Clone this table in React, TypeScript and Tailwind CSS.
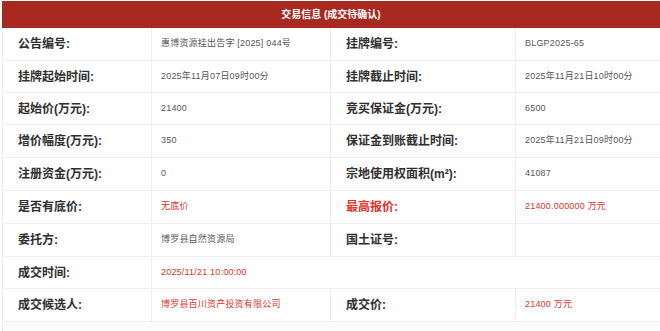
import React from "react";

type Cell = { text: string; red?: boolean };
type Row = { h: string; cells: [Cell, Cell, Cell, Cell] | [Cell, Cell] };

const rows: Row[] = [
  { h: "h-[33px]", cells: [{ text: "公告编号:" }, { text: "惠博资源挂出告字 [2025] 044号" }, { text: "挂牌编号:" }, { text: "BLGP2025-65" }] },
  { h: "h-[32px]", cells: [{ text: "挂牌起始时间:" }, { text: "2025年11月07日09时00分" }, { text: "挂牌截止时间:" }, { text: "2025年11月21日10时00分" }] },
  { h: "h-[32px]", cells: [{ text: "起始价(万元):" }, { text: "21400" }, { text: "竞买保证金(万元):" }, { text: "6500" }] },
  { h: "h-[33px]", cells: [{ text: "增价幅度(万元):" }, { text: "350" }, { text: "保证金到账截止时间:" }, { text: "2025年11月21日09时00分" }] },
  { h: "h-[33px]", cells: [{ text: "注册资金(万元):" }, { text: "0" }, { text: "宗地使用权面积(m²):" }, { text: "41087" }] },
  { h: "h-[33px]", cells: [{ text: "是否有底价:" }, { text: "无底价", red: true }, { text: "最高报价:", red: true }, { text: "21400.000000 万元", red: true }] },
  { h: "h-[33px]", cells: [{ text: "委托方:" }, { text: "博罗县自然资源局" }, { text: "国土证号:" }, { text: "" }] },
  { h: "h-[32px]", cells: [{ text: "成交时间:" }, { text: "2025/11/21 10:00:00", red: true }] },
  { h: "h-[33px]", cells: [{ text: "成交候选人:" }, { text: "博罗县百川资产投资有限公司", red: true }, { text: "成交价:" }, { text: "21400 万元", red: true }] },
];

function Label({ c, h }: { c: Cell; h: string }) {
  return (
    <div
      className={`${h} flex items-center pl-[15px] border-r border-b border-[#eeeeee] text-[12px] font-semibold whitespace-nowrap ${
        c.red ? "text-[#e0322b]" : "text-[#2e2e2e]"
      }`}
    >
      {c.text}
    </div>
  );
}

function Value({ c, h, noRight }: { c: Cell; h: string; noRight?: boolean }) {
  return (
    <div
      className={`${h} flex items-center pl-[9px] border-b border-[#eeeeee] text-[9px] tracking-[0.2px] whitespace-nowrap ${
        noRight ? "" : "border-r"
      } ${c.red ? "text-[#e0322b]" : "text-[#555555]"}`}
    >
      {c.text}
    </div>
  );
}

export default function App() {
  return (
    <div
      className="w-[660px] h-[331px] bg-white overflow-hidden pl-[2px]"
      style={{ fontFamily: '"Liberation Sans", "Noto Sans CJK SC", sans-serif' }}
    >
      <div className="mt-[1px] h-[27px] bg-[#a8291f] flex items-center justify-center text-white text-[10px] font-bold">
        交易信息 (成交待确认)
      </div>
      <div className="grid grid-cols-[149px_179px_185px_145px] border-l border-[#eeeeee]">
        {rows.map((r, i) =>
          r.cells.length === 4 ? (
            <React.Fragment key={i}>
              <Label c={r.cells[0]} h={r.h} />
              <Value c={r.cells[1]} h={r.h} />
              <Label c={r.cells[2]} h={r.h} />
              <Value c={r.cells[3]} h={r.h} />
            </React.Fragment>
          ) : (
            <React.Fragment key={i}>
              <Label c={r.cells[0]} h={r.h} />
              <Value c={r.cells[1]} h={r.h} noRight />
              <div className={`${r.h} col-span-2 border-b border-[#eeeeee]`} />
            </React.Fragment>
          )
        )}
      </div>
      <div className="h-[10px] bg-[#fbfbfb] border-l border-[#eeeeee]" />
    </div>
  );
}
